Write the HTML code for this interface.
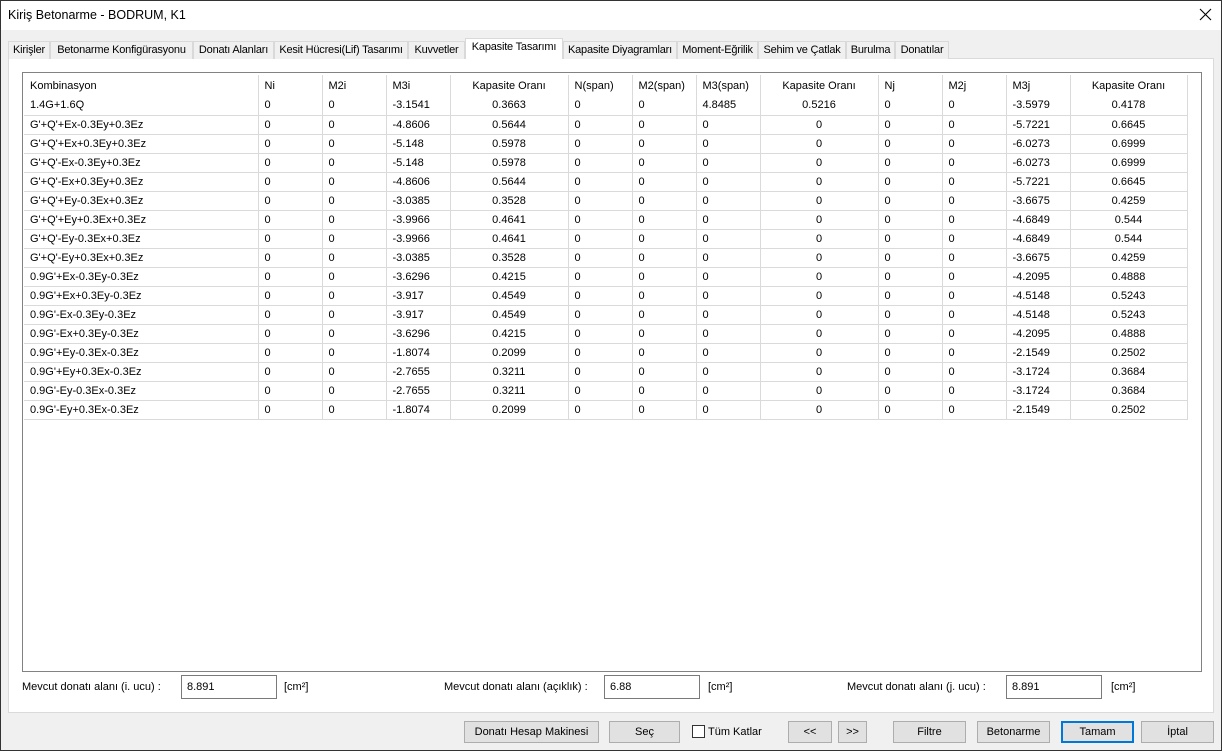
<!DOCTYPE html>
<html><head><meta charset="utf-8"><style>
*{box-sizing:border-box;margin:0;padding:0}
body{width:1222px;height:751px;background:#f0f0f0;font-family:"Liberation Sans",sans-serif;font-size:11px;color:#000;position:relative;overflow:hidden}
.a{position:absolute;white-space:nowrap}
#frame{left:0;top:0;width:1222px;height:751px;border:1px solid #333;z-index:5;pointer-events:none}
#title{left:0;top:0;width:1222px;height:30px;background:#fff}
.tab{position:absolute;top:41px;height:18px;border:1px solid #d9d9d9;border-bottom:none;background:#f0f0f0;text-align:center;line-height:16px;font-size:11px;white-space:nowrap;overflow:hidden;letter-spacing:-0.2px}
#panel{left:8px;top:58px;width:1206px;height:655px;background:#fff;border:1px solid #dadada}
#tbl{left:22px;top:72px;width:1180px;height:600px;border:1px solid #828282;background:#fff}
table{position:absolute;left:1px;top:2px;border-collapse:collapse;table-layout:fixed}
td{height:19px;padding:0 0 0 6px;border-right:1px solid #dadada;border-bottom:1px solid #dadada;white-space:nowrap;overflow:hidden;font-size:11px}
tr.h td{height:21px;border-bottom:none}
td.c{text-align:center;padding:0}
.inp{position:absolute;top:675px;width:96px;height:24px;border:1px solid #7a7a7a;background:#fff;padding:5px 5px;font-size:11px}
.btn{position:absolute;top:721px;height:22px;border:1px solid #adadad;background:#e1e1e1;text-align:center;line-height:20px;font-size:11px}
</style></head><body>
<div class="a" id="title"></div>
<div class="a" style="left:8px;top:8px;font-size:12.5px">Kiriş Betonarme - BODRUM, K1</div>
<svg class="a" style="left:1199px;top:8px" width="13" height="13"><path d="M1 1L12 12M12 1L1 12" stroke="#000" stroke-width="1.1"/></svg>
<div class="a" id="panel"></div>
<div class="tab" style="left:8px;width:42px">Kirişler</div>
<div class="tab" style="left:50px;width:143px">Betonarme Konfigürasyonu</div>
<div class="tab" style="left:193px;width:81px">Donatı Alanları</div>
<div class="tab" style="left:274px;width:134px">Kesit Hücresi(Lif) Tasarımı</div>
<div class="tab" style="left:408px;width:57px">Kuvvetler</div>
<div class="tab" style="left:465px;width:98px;top:38px;height:21px;background:#fff;line-height:17px;z-index:2">Kapasite Tasarımı</div>
<div class="tab" style="left:563px;width:114px">Kapasite Diyagramları</div>
<div class="tab" style="left:677px;width:81px">Moment-Eğrilik</div>
<div class="tab" style="left:758px;width:88px">Sehim ve Çatlak</div>
<div class="tab" style="left:846px;width:49px">Burulma</div>
<div class="tab" style="left:895px;width:54px">Donatılar</div>
<div class="a" id="tbl">
<table>
<colgroup><col style="width:234px"><col style="width:64px"><col style="width:64px"><col style="width:64px"><col style="width:118px"><col style="width:64px"><col style="width:64px"><col style="width:64px"><col style="width:118px"><col style="width:64px"><col style="width:64px"><col style="width:64px"><col style="width:117px"></colgroup>
<tr class="h"><td>Kombinasyon</td><td>Ni</td><td>M2i</td><td>M3i</td><td class="c">Kapasite Oranı</td><td>N(span)</td><td>M2(span)</td><td>M3(span)</td><td class="c">Kapasite Oranı</td><td>Nj</td><td>M2j</td><td>M3j</td><td class="c">Kapasite Oranı</td></tr>
<tr><td>1.4G+1.6Q</td><td>0</td><td>0</td><td>-3.1541</td><td class="c">0.3663</td><td>0</td><td>0</td><td>4.8485</td><td class="c">0.5216</td><td>0</td><td>0</td><td>-3.5979</td><td class="c">0.4178</td></tr>
<tr><td>G'+Q'+Ex-0.3Ey+0.3Ez</td><td>0</td><td>0</td><td>-4.8606</td><td class="c">0.5644</td><td>0</td><td>0</td><td>0</td><td class="c">0</td><td>0</td><td>0</td><td>-5.7221</td><td class="c">0.6645</td></tr>
<tr><td>G'+Q'+Ex+0.3Ey+0.3Ez</td><td>0</td><td>0</td><td>-5.148</td><td class="c">0.5978</td><td>0</td><td>0</td><td>0</td><td class="c">0</td><td>0</td><td>0</td><td>-6.0273</td><td class="c">0.6999</td></tr>
<tr><td>G'+Q'-Ex-0.3Ey+0.3Ez</td><td>0</td><td>0</td><td>-5.148</td><td class="c">0.5978</td><td>0</td><td>0</td><td>0</td><td class="c">0</td><td>0</td><td>0</td><td>-6.0273</td><td class="c">0.6999</td></tr>
<tr><td>G'+Q'-Ex+0.3Ey+0.3Ez</td><td>0</td><td>0</td><td>-4.8606</td><td class="c">0.5644</td><td>0</td><td>0</td><td>0</td><td class="c">0</td><td>0</td><td>0</td><td>-5.7221</td><td class="c">0.6645</td></tr>
<tr><td>G'+Q'+Ey-0.3Ex+0.3Ez</td><td>0</td><td>0</td><td>-3.0385</td><td class="c">0.3528</td><td>0</td><td>0</td><td>0</td><td class="c">0</td><td>0</td><td>0</td><td>-3.6675</td><td class="c">0.4259</td></tr>
<tr><td>G'+Q'+Ey+0.3Ex+0.3Ez</td><td>0</td><td>0</td><td>-3.9966</td><td class="c">0.4641</td><td>0</td><td>0</td><td>0</td><td class="c">0</td><td>0</td><td>0</td><td>-4.6849</td><td class="c">0.544</td></tr>
<tr><td>G'+Q'-Ey-0.3Ex+0.3Ez</td><td>0</td><td>0</td><td>-3.9966</td><td class="c">0.4641</td><td>0</td><td>0</td><td>0</td><td class="c">0</td><td>0</td><td>0</td><td>-4.6849</td><td class="c">0.544</td></tr>
<tr><td>G'+Q'-Ey+0.3Ex+0.3Ez</td><td>0</td><td>0</td><td>-3.0385</td><td class="c">0.3528</td><td>0</td><td>0</td><td>0</td><td class="c">0</td><td>0</td><td>0</td><td>-3.6675</td><td class="c">0.4259</td></tr>
<tr><td>0.9G'+Ex-0.3Ey-0.3Ez</td><td>0</td><td>0</td><td>-3.6296</td><td class="c">0.4215</td><td>0</td><td>0</td><td>0</td><td class="c">0</td><td>0</td><td>0</td><td>-4.2095</td><td class="c">0.4888</td></tr>
<tr><td>0.9G'+Ex+0.3Ey-0.3Ez</td><td>0</td><td>0</td><td>-3.917</td><td class="c">0.4549</td><td>0</td><td>0</td><td>0</td><td class="c">0</td><td>0</td><td>0</td><td>-4.5148</td><td class="c">0.5243</td></tr>
<tr><td>0.9G'-Ex-0.3Ey-0.3Ez</td><td>0</td><td>0</td><td>-3.917</td><td class="c">0.4549</td><td>0</td><td>0</td><td>0</td><td class="c">0</td><td>0</td><td>0</td><td>-4.5148</td><td class="c">0.5243</td></tr>
<tr><td>0.9G'-Ex+0.3Ey-0.3Ez</td><td>0</td><td>0</td><td>-3.6296</td><td class="c">0.4215</td><td>0</td><td>0</td><td>0</td><td class="c">0</td><td>0</td><td>0</td><td>-4.2095</td><td class="c">0.4888</td></tr>
<tr><td>0.9G'+Ey-0.3Ex-0.3Ez</td><td>0</td><td>0</td><td>-1.8074</td><td class="c">0.2099</td><td>0</td><td>0</td><td>0</td><td class="c">0</td><td>0</td><td>0</td><td>-2.1549</td><td class="c">0.2502</td></tr>
<tr><td>0.9G'+Ey+0.3Ex-0.3Ez</td><td>0</td><td>0</td><td>-2.7655</td><td class="c">0.3211</td><td>0</td><td>0</td><td>0</td><td class="c">0</td><td>0</td><td>0</td><td>-3.1724</td><td class="c">0.3684</td></tr>
<tr><td>0.9G'-Ey-0.3Ex-0.3Ez</td><td>0</td><td>0</td><td>-2.7655</td><td class="c">0.3211</td><td>0</td><td>0</td><td>0</td><td class="c">0</td><td>0</td><td>0</td><td>-3.1724</td><td class="c">0.3684</td></tr>
<tr><td>0.9G'-Ey+0.3Ex-0.3Ez</td><td>0</td><td>0</td><td>-1.8074</td><td class="c">0.2099</td><td>0</td><td>0</td><td>0</td><td class="c">0</td><td>0</td><td>0</td><td>-2.1549</td><td class="c">0.2502</td></tr>
</table>
</div>
<div class="a" style="left:22px;top:681px">Mevcut donatı alanı (i. ucu) :</div>
<div class="inp" style="left:181px">8.891</div>
<div class="a" style="left:284px;top:681px">[cm²]</div>
<div class="a" style="left:444px;top:681px">Mevcut donatı alanı (açıklık) :</div>
<div class="inp" style="left:604px">6.88</div>
<div class="a" style="left:708px;top:681px">[cm²]</div>
<div class="a" style="left:847px;top:681px">Mevcut donatı alanı (j. ucu) :</div>
<div class="inp" style="left:1006px">8.891</div>
<div class="a" style="left:1111px;top:681px">[cm²]</div>
<div class="btn" style="left:464px;width:135px">Donatı Hesap Makinesi</div>
<div class="btn" style="left:609px;width:71px">Seç</div>
<div class="a" style="left:692px;top:725px;width:13px;height:13px;border:1px solid #333;background:#fff"></div>
<div class="a" style="left:708px;top:726px">Tüm Katlar</div>
<div class="btn" style="left:788px;width:44px">&lt;&lt;</div>
<div class="btn" style="left:838px;width:29px">&gt;&gt;</div>
<div class="btn" style="left:893px;width:73px">Filtre</div>
<div class="btn" style="left:977px;width:73px">Betonarme</div>
<div class="btn" style="left:1061px;width:73px;border:2px solid #0078d7;line-height:18px">Tamam</div>
<div class="btn" style="left:1141px;width:73px">İptal</div>
<div class="a" id="frame"></div>
</body></html>
